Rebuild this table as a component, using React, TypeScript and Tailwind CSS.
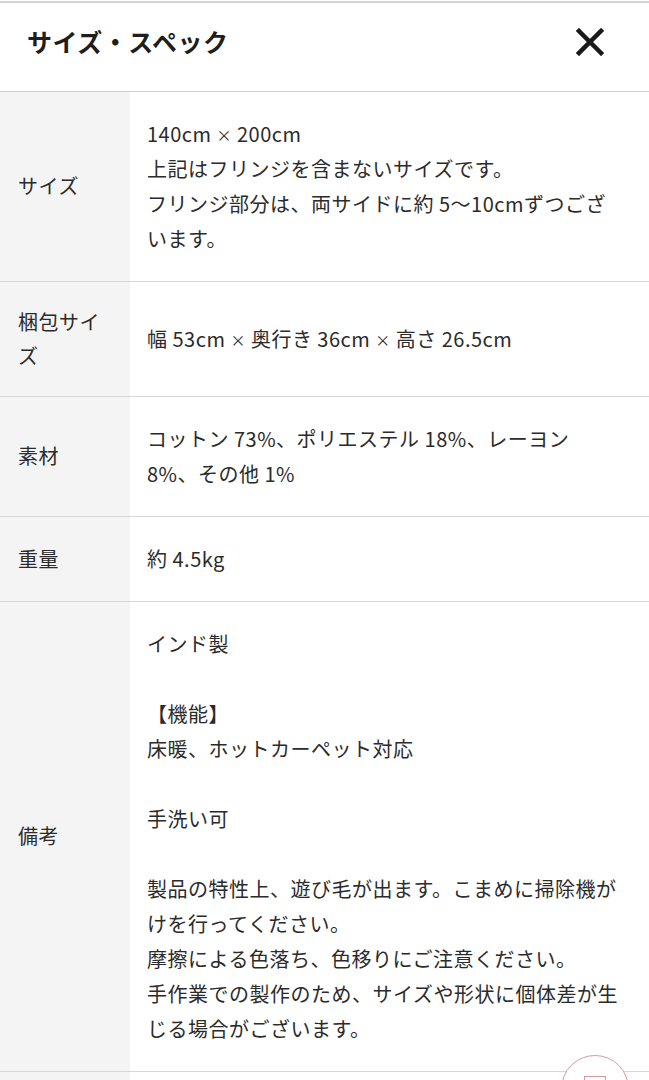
import React from 'react';

type Spec = { label: string; lines: string[] };

const specs: Spec[] = [
  {
    label: 'サイズ',
    lines: [
      '140cm × 200cm',
      '上記はフリンジを含まないサイズです。',
      'フリンジ部分は、両サイドに約 5〜10cmずつござ',
      'います。',
    ],
  },
  { label: '梱包サイズ', lines: ['幅 53cm × 奥行き 36cm × 高さ 26.5cm'] },
  { label: '素材', lines: ['コットン 73%、ポリエステル 18%、レーヨン', '8%、その他 1%'] },
  { label: '重量', lines: ['約 4.5kg'] },
  {
    label: '備考',
    lines: [
      'インド製',
      '',
      '【機能】',
      '床暖、ホットカーペット対応',
      '',
      '手洗い可',
      '',
      '製品の特性上、遊び毛が出ます。こまめに掃除機が',
      'けを行ってください。',
      '摩擦による色落ち、色移りにご注意ください。',
      '手作業での製作のため、サイズや形状に個体差が生',
      'じる場合がございます。',
    ],
  },
];

// the × in the original font is much smaller than Noto's
const Line: React.FC<{ text: string }> = ({ text }) => {
  const parts = text.split('×');
  return (
    <div className="leading-[35px] h-[35px] whitespace-nowrap">
      {parts.map((p, i) => (
        <React.Fragment key={i}>
          {i > 0 && <span className="text-[15px] align-[1px]">×</span>}
          {p}
        </React.Fragment>
      ))}
    </div>
  );
};

const SpecRow: React.FC<{ spec: Spec }> = ({ spec }) => (
  <div className="flex border-b-[1.5px] border-[#d6d6d6]">
    <div className="w-[130px] shrink-0 bg-[#f4f4f4] pl-[18px] pr-[16px] py-[23px] flex items-center">
      <span className="leading-[34px]">{spec.label}</span>
    </div>
    <div className="flex-1 pl-[17px] pr-3 py-[24.5px] flex flex-col justify-center">
      {spec.lines.map((line, i) => (
        <Line key={i} text={line} />
      ))}
    </div>
  </div>
);

export default function App() {
  return (
    <div
      className="relative min-h-screen bg-white text-[#2b2b2b] text-[20px] tracking-[0.5px] overflow-hidden"
      style={{ fontFamily: '"Noto Sans CJK JP", "Noto Sans", sans-serif' }}
    >
      <div className="h-[2px] bg-[#d4d4d4] mt-[1px]" />
      <div className="h-[88.5px] flex items-center justify-between pl-[27px] pr-[45px] pb-[10px] border-b-[1.5px] border-[#d0d0d0]">
        <h1 className="text-[25px] font-bold tracking-[0.5px] text-[#1e1e1e]">サイズ・スペック</h1>
        <svg width="28" height="28" viewBox="0 0 28 28" aria-label="閉じる">
          <path d="M3 3 L25 25 M25 3 L3 25" stroke="#1a1a1a" strokeWidth="4.5" strokeLinecap="square" />
        </svg>
      </div>
      {specs.map((s) => (
        <SpecRow key={s.label} spec={s} />
      ))}
      <div className="flex h-[40px]">
        <div className="w-[130px] bg-[#f4f4f4]" />
      </div>
      <button className="absolute left-[561px] top-[1055px] w-[68px] h-[68px] rounded-full border-[1.5px] border-[#d79a9a] bg-white flex justify-center">
        <span className="mt-[20px] w-[22px] h-[24px] border-[1.5px] border-[#d79a9a]" />
      </button>
    </div>
  );
}
